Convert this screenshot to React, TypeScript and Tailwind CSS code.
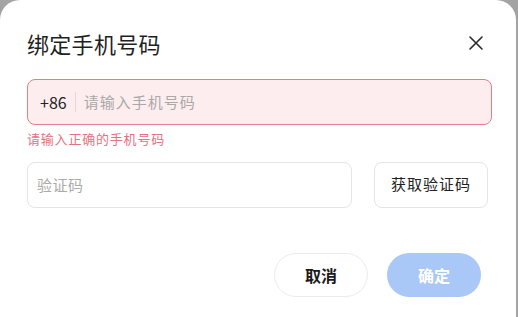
import React from "react";

export default function App() {
  const font = { fontFamily: '"Noto Sans CJK SC", "Noto Sans", sans-serif' };
  return (
    <div className="w-[518px] h-[317px] bg-[#a3a3a3] overflow-hidden" style={font}>
      <div className="w-[516px] h-[340px] bg-white rounded-[20px] pl-[27px] pr-[26px] pt-[28px] flex flex-col">
        <div className="flex items-center justify-between h-[30px]">
          <span className="text-[22px] leading-[30px] text-[#1f1f1f] tracking-[0.3px]">绑定手机号码</span>
          <svg width="14" height="14" viewBox="0 0 14 14" className="mr-[7px]">
            <path d="M1 1L13 13M13 1L1 13" stroke="#2a2a2a" strokeWidth="1.6" strokeLinecap="round" />
          </svg>
        </div>
        <div className="mt-[21px] h-[46px] w-[465px] rounded-[8px] border border-[#e57e89] bg-[#fdedef] flex items-center pl-[12px]">
          <span className="text-[16px] text-[#222] leading-[20px]">+86</span>
          <div className="w-px h-[20px] bg-[#ead6d8] mx-[8px]" />
          <span className="text-[15px] text-[#a9a9a9] leading-[20px] tracking-[1px]">请输入手机号码</span>
        </div>
        <div className="mt-[4px] text-[13px] leading-[20px] text-[#e6717f] tracking-[0.8px]">请输入正确的手机号码</div>
        <div className="mt-[13px] flex items-center">
          <div className="h-[46px] w-[325px] rounded-[8px] border border-[#e4e4e4] flex items-center pl-[9px]">
            <span className="text-[15px] text-[#ababab] tracking-[0.5px]">验证码</span>
          </div>
          <div className="ml-[22px] h-[46px] w-[114px] rounded-[8px] border border-[#e4e4e4] flex items-center justify-center -mt-[1px]">
            <span className="text-[15px] text-[#222] tracking-[1px]">获取验证码</span>
          </div>
        </div>
        <div className="mt-[45px] flex justify-end pr-[9px] gap-[19px]">
          <div className="h-[44px] w-[94px] rounded-full border border-[#ececec] flex items-center justify-center">
            <span className="text-[16px] font-bold text-[#1a1a1a]">取消</span>
          </div>
          <div className="h-[44px] w-[94px] rounded-full bg-[#a9c7f7] flex items-center justify-center">
            <span className="text-[16px] font-bold text-white">确定</span>
          </div>
        </div>
      </div>
    </div>
  );
}
